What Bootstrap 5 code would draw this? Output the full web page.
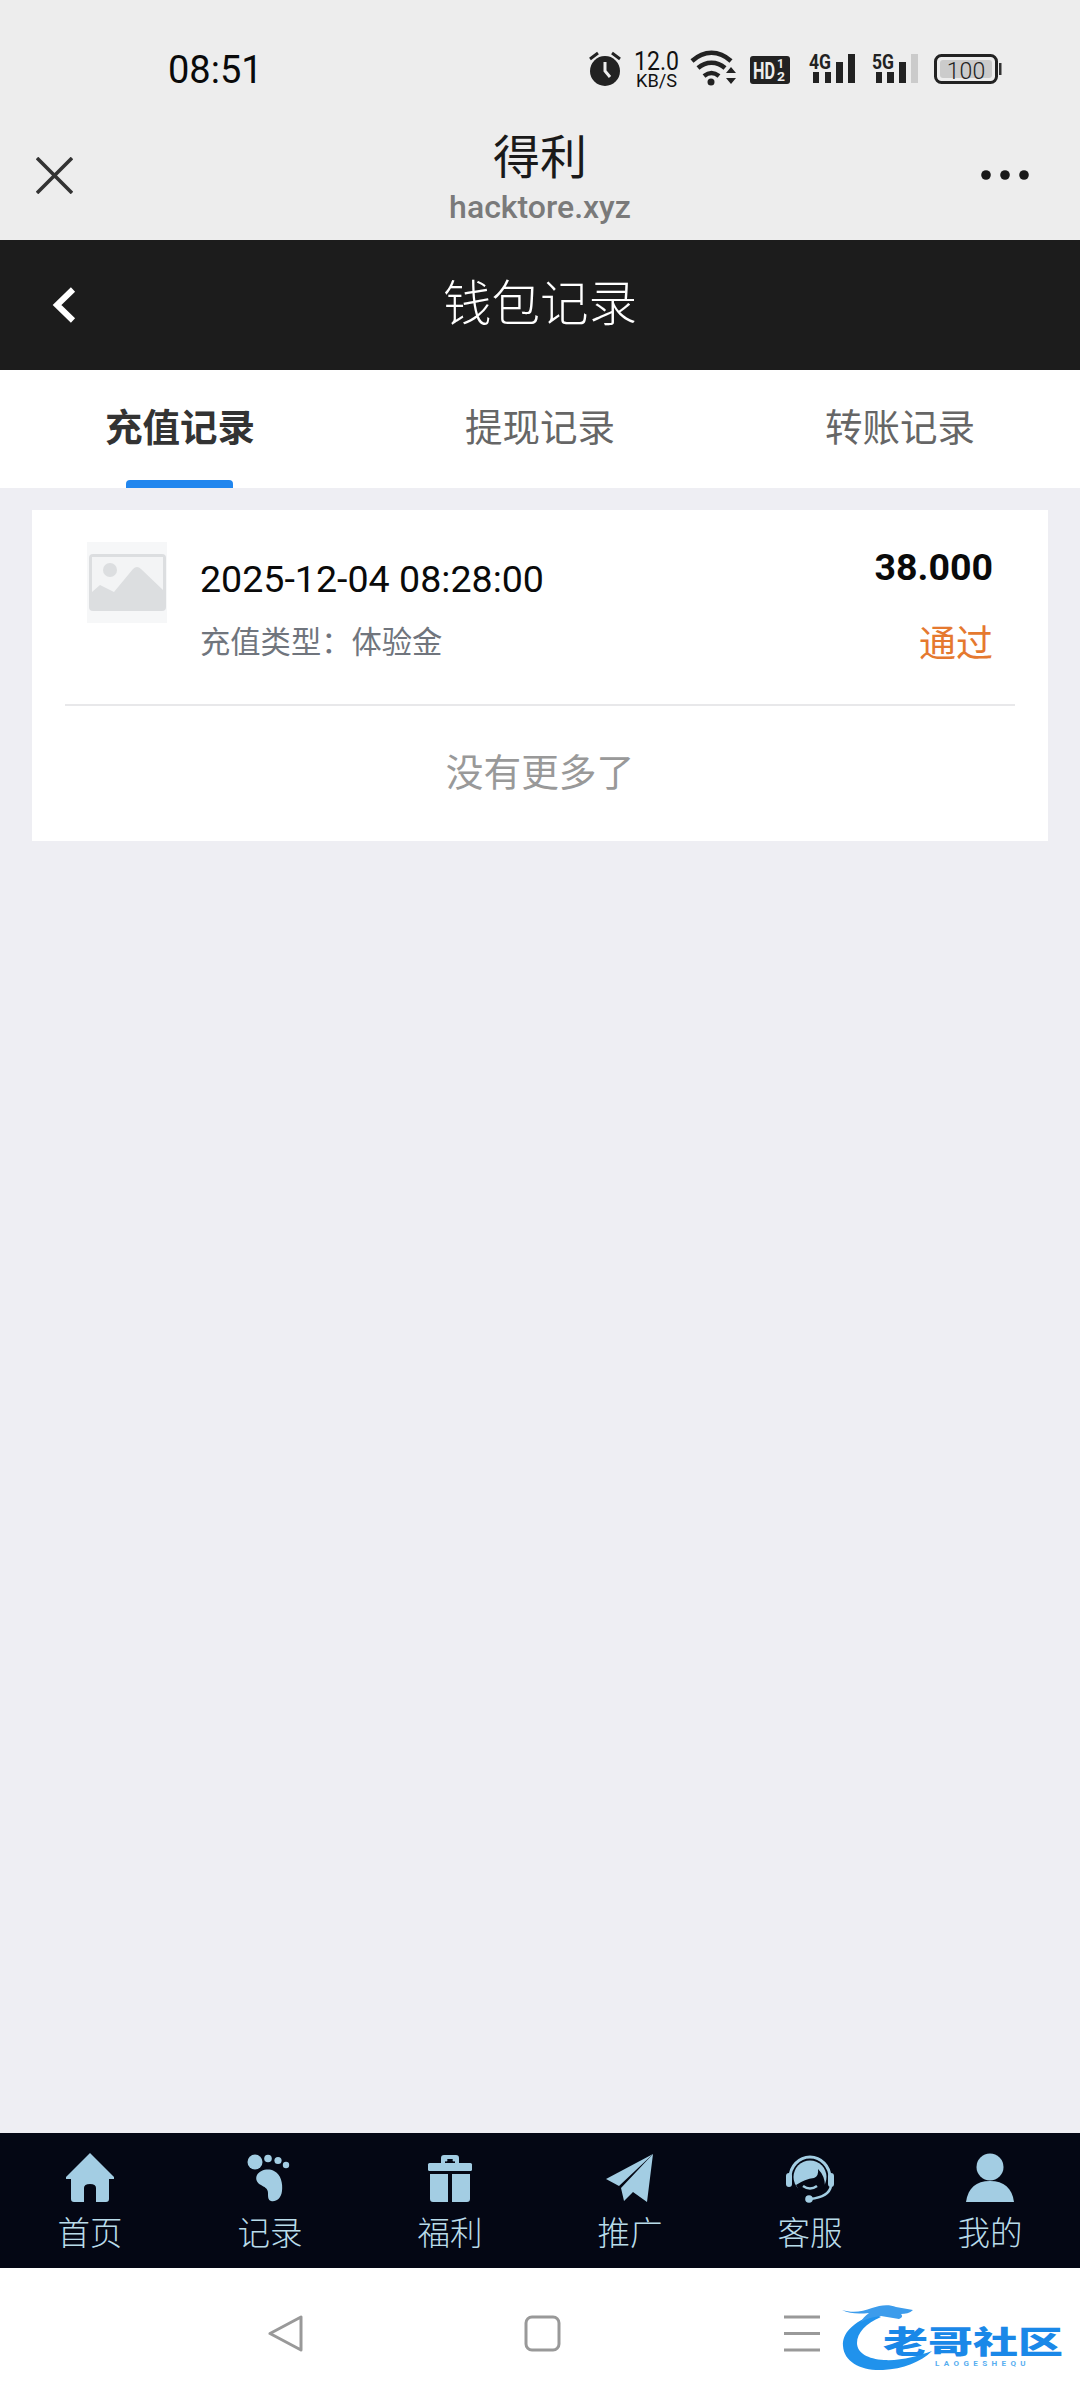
<!DOCTYPE html>
<html lang="zh-CN">
<head>
    <meta charset="UTF-8">
    <meta name="viewport" content="width=device-width, initial-scale=1.0">
    <title>钱包记录</title>
    <link href="https://cdn.jsdelivr.net/npm/bootstrap@5.3.0/dist/css/bootstrap.min.css" rel="stylesheet">
    <style>
        html, body { margin: 0; }
        body {
            width: 1080px;
            height: 2400px;
            background-color: #eeeef3;
            font-family: Roboto, "Noto Sans CJK SC", sans-serif;
            overflow: hidden;
        }
        .chrome-top { height: 240px; background-color: #ededed; }
        .status-row { height: 105px; padding: 35px 0 0 168px; }
        .clock-text { font-size: 38px; line-height: 70px; color: #0a0a0a; width: 412px; }
        .status-icons { width: 480px; height: 70px; }
        .title-row { height: 135px; }
        .title-side { width: 120px; }
        .close-icon { width: 37px; height: 37px; margin: 52px 0 0 36px; display: block; }
        .more-icon { width: 48px; height: 10px; margin: 65px 51px 0 21px; display: block; }
        .title-block { padding-top: 23px; }
        .site-name { font-size: 47px; line-height: 60px; color: #1a1a1a; }
        .site-url { font-size: 32px; line-height: 36px; color: #7a7a7a; font-weight: 500; margin-top: 1px; }
        .page-bar { height: 130px; background-color: #1c1c1c; padding-left: 52px; }
        .back-icon { width: 24px; height: 36px; }
        .page-title { font-size: 48.500px; font-weight: 300; color: #fff; line-height: 130px; left: 0; right: 0; }
        .tab-strip { height: 118px; background-color: #fff; }
        .tab-item { width: 360px; font-size: 37.5px; line-height: 116px; color: #666; text-decoration: none; }
        .tab-item.is-active { color: #333; font-weight: 700; }
        .tab-item.is-active::after {
            content: "";
            position: absolute;
            left: 126px;
            bottom: 0;
            width: 107px;
            height: 8px;
            border-radius: 4px 4px 0 0;
            background-color: #2186ee;
        }
        .record-wrap { padding: 22px 32px 0; }
        .record-box { background-color: #fff; height: 331px; }
        .record-row { height: 194px; padding: 32px 55px 0 55px; }
        .thumb-box { width: 80px; height: 81px; margin-right: 33px; }
        .record-date { font-size: 37.6px; line-height: 50px; color: #0a0a0a; margin-top: 12px; }
        .record-type { font-size: 30.3px; line-height: 40px; color: #70757d; margin-top: 19px; }
        .record-amount { font-size: 37.5px; line-height: 40px; font-weight: 700; color: #0a0a0a; margin-top: 5px; }
        .record-state { font-size: 37px; line-height: 40px; color: #e5792f; margin-top: 38px; }
        .record-line { height: 2px; margin: 0 33px; background-color: #e8e8ea; }
        .record-end { font-size: 37.7px; line-height: 135px; color: #999; }
        .tabbar-dark { height: 135px; background-color: #040714; }
        .tabbar-cell { width: 180px; padding-top: 20px; }
        .tabbar-cell svg { width: 50px; height: 50px; display: block; }
        .tabbar-label { font-size: 32.5px; line-height: 46px; color: #b9dcea; margin-top: 8px; font-weight: 300; }
        .system-nav { height: 132px; background-color: #fff; padding-top: 47px; }
        .nav-glyph { height: 37px; }
        .nav-back { width: 38px; margin-left: 267px; }
        .nav-home { width: 38px; margin-left: 219px; }
        .nav-menu { width: 38px; margin-left: 221px; }
        .logo-box { right: 17px; top: 34px; width: 224px; height: 72px; }
        .logo-box svg { left: 0; top: 0; }
        .logo-name {
            left: 44px;
            top: 18px;
            font-size: 45px;
            line-height: 45px;
            font-weight: 900;
            color: #1a88e8;
            white-space: nowrap;
            transform: scaleY(.68);
            transform-origin: 0 50%;
        }
        .logo-sub {
            left: 96px;
            top: 57px;
            font-size: 8px;
            line-height: 9px;
            font-weight: 700;
            color: #58aef0;
            letter-spacing: 4.4px;
        }
    </style>
</head>

<body class="d-flex flex-column">
    <div class="chrome-top">
        <div class="status-row d-flex">
            <div class="clock-text">08:51</div>
            <!-- status icons share one svg, coords are page px minus (580,35) -->
            <svg class="status-icons" viewBox="0 0 480 70" xmlns="http://www.w3.org/2000/svg">
                <!-- alarm -->
                <circle cx="25" cy="36" r="15" fill="#222"/>
                <path d="M25 27v9l5 6" fill="none" stroke="#ededed" stroke-width="3"/>
                <path d="M10 24l8-6M40 24l-8-6" stroke="#222" stroke-width="3"/>
                <!-- speed -->
                <text x="54" y="35" textLength="45" lengthAdjust="spacingAndGlyphs" font-family="Roboto" font-size="25" fill="#111">12.0</text>
                <text x="56" y="52" textLength="41" lengthAdjust="spacingAndGlyphs" font-family="Roboto" font-size="19" fill="#111">KB/S</text>
                <!-- wifi -->
                <g fill="none" stroke="#222" stroke-width="4.5">
                    <path d="M112 26c12-11 27-11 39 0"/>
                    <path d="M118 33c8-7 19-7 27 0"/>
                    <path d="M124 41c5-4 10-4 15 0"/>
                </g>
                <circle cx="131" cy="47" r="3.5" fill="#222"/>
                <path d="M146 38l5-6 5 6zM146 43l5 6 5-6z" fill="#222"/>
                <!-- hd -->
                <rect x="170" y="21" width="40" height="28" rx="3" fill="#222"/>
                <text x="173" y="44" textLength="22" lengthAdjust="spacingAndGlyphs" font-family="Roboto" font-weight="700" font-size="23" fill="#ededed">HD</text>
                <text x="197" y="33" textLength="7" lengthAdjust="spacingAndGlyphs" font-family="Roboto" font-weight="700" font-size="12" fill="#ededed">1</text>
                <text x="197" y="46" textLength="8" lengthAdjust="spacingAndGlyphs" font-family="Roboto" font-weight="700" font-size="12" fill="#ededed">2</text>
                <!-- 4g -->
                <text x="229" y="34" textLength="22" lengthAdjust="spacingAndGlyphs" font-family="Roboto" font-weight="700" font-size="20" fill="#222">4G</text>
                <path d="M233 37h6v11h-6zM245 37h6v11h-6zM256 27h7v21h-7zM268 19h7v29h-7z" fill="#222"/>
                <!-- 5g -->
                <text x="292" y="34" textLength="22" lengthAdjust="spacingAndGlyphs" font-family="Roboto" font-weight="700" font-size="20" fill="#222">5G</text>
                <path d="M296 37h6v11h-6zM307 37h7v11h-7zM319 27h7v21h-7z" fill="#222"/>
                <rect x="331" y="19" width="7" height="29" fill="#cbcbcb"/>
                <!-- battery -->
                <rect x="355.5" y="20.5" width="61" height="27" rx="6" fill="none" stroke="#222" stroke-width="3"/>
                <rect x="360" y="25" width="52" height="18" rx="3" fill="#cbcbcb"/>
                <rect x="419" y="28" width="2.5" height="12" fill="#333"/>
                <text x="386" y="44" text-anchor="middle" font-family="Roboto" font-weight="300" font-size="23" fill="#222">100</text>
            </svg>
        </div>
        <div class="title-row d-flex align-items-start">
            <div class="title-side">
                <svg class="close-icon" viewBox="0 0 37 37" xmlns="http://www.w3.org/2000/svg">
                    <path d="M1 1l35 35M36 1L1 36" stroke="#333" stroke-width="3.6" fill="none"/>
                </svg>
            </div>
            <div class="title-block text-center flex-grow-1">
                <div class="site-name">得利</div>
                <div class="site-url">hacktore.xyz</div>
            </div>
            <div class="title-side">
                <svg class="more-icon" viewBox="0 0 48 10" xmlns="http://www.w3.org/2000/svg">
                    <circle cx="5" cy="5" r="4.8" fill="#1a1a1a"/>
                    <circle cx="24" cy="5" r="4.8" fill="#1a1a1a"/>
                    <circle cx="43" cy="5" r="4.8" fill="#1a1a1a"/>
                </svg>
            </div>
        </div>
    </div>

    <div class="page-bar d-flex align-items-center position-relative">
        <svg class="back-icon" viewBox="0 0 24 36" xmlns="http://www.w3.org/2000/svg">
            <path d="M21 2.5L5 18l16 15.5" fill="none" stroke="#fff" stroke-width="6"/>
        </svg>
        <div class="page-title position-absolute text-center">钱包记录</div>
    </div>

    <div class="tab-strip d-flex">
        <a class="tab-item is-active position-relative text-center" href="#">充值记录</a>
        <a class="tab-item text-center" href="#">提现记录</a>
        <a class="tab-item text-center" href="#">转账记录</a>
    </div>

    <div class="record-wrap flex-grow-1">
        <div class="record-box">
            <div class="record-row d-flex align-items-start">
                <svg class="thumb-box flex-shrink-0" viewBox="0 0 80 81" xmlns="http://www.w3.org/2000/svg">
                    <rect width="80" height="81" fill="#f6f7f8"/>
                    <rect x="2" y="12" width="77" height="57" rx="4" fill="#dcdee0"/>
                    <rect x="5" y="15" width="71" height="40" fill="#f3f4f5"/>
                    <circle cx="23" cy="28" r="7" fill="#dcdee0"/>
                    <path d="M5 50l8-7 14 7L46 27q4-4 8 0l22 21v10H5z" fill="#dcdee0"/>
                </svg>
                <div class="flex-grow-1">
                    <div class="record-date">2025-12-04 08:28:00</div>
                    <div class="record-type">充值类型：体验金</div>
                </div>
                <div class="text-end">
                    <div class="record-amount">38.000</div>
                    <div class="record-state">通过</div>
                </div>
            </div>
            <div class="record-line"></div>
            <div class="record-end text-center">没有更多了</div>
        </div>
    </div>

    <div class="tabbar-dark d-flex">
        <div class="tabbar-cell d-flex flex-column align-items-center">
            <svg viewBox="0 0 50 50" xmlns="http://www.w3.org/2000/svg">
                <path d="M25 0L1 24v2h5v20q0 3 3 3h10V35q0-4 6-4t6 4v14h10q3 0 3-3V26h5v-2z" fill="#a3cde3"/>
            </svg>
            <div class="tabbar-label">首页</div>
        </div>
        <div class="tabbar-cell d-flex flex-column align-items-center">
            <svg viewBox="0 0 50 50" xmlns="http://www.w3.org/2000/svg">
                <g fill="#a3cde3">
                    <circle cx="10" cy="9" r="7.5"/>
                    <circle cx="23" cy="5.5" r="3.8"/>
                    <circle cx="33" cy="7.5" r="3.6"/>
                    <circle cx="41" cy="12" r="3.2"/>
                    <path d="M12 22c3-5 11-7 17-4 7 3 9 13 8 20-1 8-6 11-11 10-3-1-3-4-3-8 0-5-4-6-7-8-4-2-6-6-4-10z"/>
                </g>
            </svg>
            <div class="tabbar-label">记录</div>
        </div>
        <div class="tabbar-cell d-flex flex-column align-items-center">
            <svg viewBox="0 0 50 50" xmlns="http://www.w3.org/2000/svg">
                <g fill="#a3cde3">
                    <path d="M16 10V5q0-3 3-3h12q3 0 3 3v5h-4V6H20v4z"/>
                    <circle cx="21" cy="7" r="1.5"/>
                    <circle cx="29" cy="7" r="1.5"/>
                    <rect x="3" y="10" width="44" height="8" rx="1.5"/>
                    <path d="M5 21h18v28H8q-3 0-3-3zM27 21h18v25q0 3-3 3H27z"/>
                </g>
            </svg>
            <div class="tabbar-label">福利</div>
        </div>
        <div class="tabbar-cell d-flex flex-column align-items-center">
            <svg viewBox="0 0 50 50" xmlns="http://www.w3.org/2000/svg">
                <g fill="#a3cde3">
                    <path d="M48 1L1 26l13 7z"/>
                    <path d="M48 1L16 35l3 13 9-9 14 10z"/>
                </g>
            </svg>
            <div class="tabbar-label">推广</div>
        </div>
        <div class="tabbar-cell d-flex flex-column align-items-center">
            <svg viewBox="0 0 50 50" xmlns="http://www.w3.org/2000/svg">
                <path d="M5 25a20 21 0 0 1 40 0" fill="none" stroke="#a3cde3" stroke-width="3"/>
                <circle cx="25" cy="24" r="16.500" fill="#a3cde3"/>
                <path d="M11 32q9-6 18-7 5-2 4-9 7 7 7 17-3 8-15 10-10-1-14-11z" fill="#040714"/>
                <path d="M18 33q7 5 14 0" fill="none" stroke="#a3cde3" stroke-width="2.500"/>
                <rect x="1" y="20" width="6" height="14" rx="3" fill="#a3cde3"/>
                <rect x="43" y="20" width="6" height="14" rx="3" fill="#a3cde3"/>
                <path d="M46 33q-2 11-21 13" fill="none" stroke="#a3cde3" stroke-width="2.500"/>
                <circle cx="24" cy="46" r="3.800" fill="#a3cde3"/>
            </svg>
            <div class="tabbar-label">客服</div>
        </div>
        <div class="tabbar-cell d-flex flex-column align-items-center">
            <svg viewBox="0 0 50 50" xmlns="http://www.w3.org/2000/svg">
                <circle cx="25" cy="14" r="13.5" fill="#a3cde3"/>
                <path d="M1 49c2-14 10-21 24-21s22 7 24 21z" fill="#a3cde3"/>
            </svg>
            <div class="tabbar-label">我的</div>
        </div>
    </div>

    <div class="system-nav d-flex align-items-start position-relative">
        <svg class="nav-glyph nav-back" viewBox="0 0 38 37" xmlns="http://www.w3.org/2000/svg">
            <path d="M3 18.5L34 2v33z" fill="none" stroke="#999" stroke-width="3" stroke-linejoin="round"/>
        </svg>
        <svg class="nav-glyph nav-home" viewBox="0 0 38 37" xmlns="http://www.w3.org/2000/svg">
            <rect x="2" y="2" width="33" height="33" rx="6" fill="none" stroke="#999" stroke-width="3"/>
        </svg>
        <svg class="nav-glyph nav-menu" viewBox="0 0 38 37" xmlns="http://www.w3.org/2000/svg">
            <path d="M1 2h36M1 18.500h36M1 35h36" stroke="#999" stroke-width="3"/>
        </svg>
        <div class="logo-box position-absolute">
            <svg class="position-absolute" width="224" height="72" viewBox="0 0 224 72" xmlns="http://www.w3.org/2000/svg">
                <path d="M36 12C14 20 3 31 4 44c1 16 18 25 40 24 20-1 38-8 49-19-14 5-31 10-48 9-16-1-27-7-27-17 0-10 9-20 24-26z" fill="#2092ec"/>
                <path d="M3 8c10 3 20 2 30-2 8-3 17-4 24-1l17 3c-3 3-8 4-12 4 2 2 1 4-2 5-6-1-12-2-18-3-9 1-15 3-20 6 1-3 4-6 8-9C20 12 11 12 3 8z" fill="#3c9cec"/>
            </svg>
            <div class="logo-name position-absolute">老哥社区</div>
            <div class="logo-sub position-absolute">LAOGESHEQU</div>
        </div>
    </div>
</body>

</html>
